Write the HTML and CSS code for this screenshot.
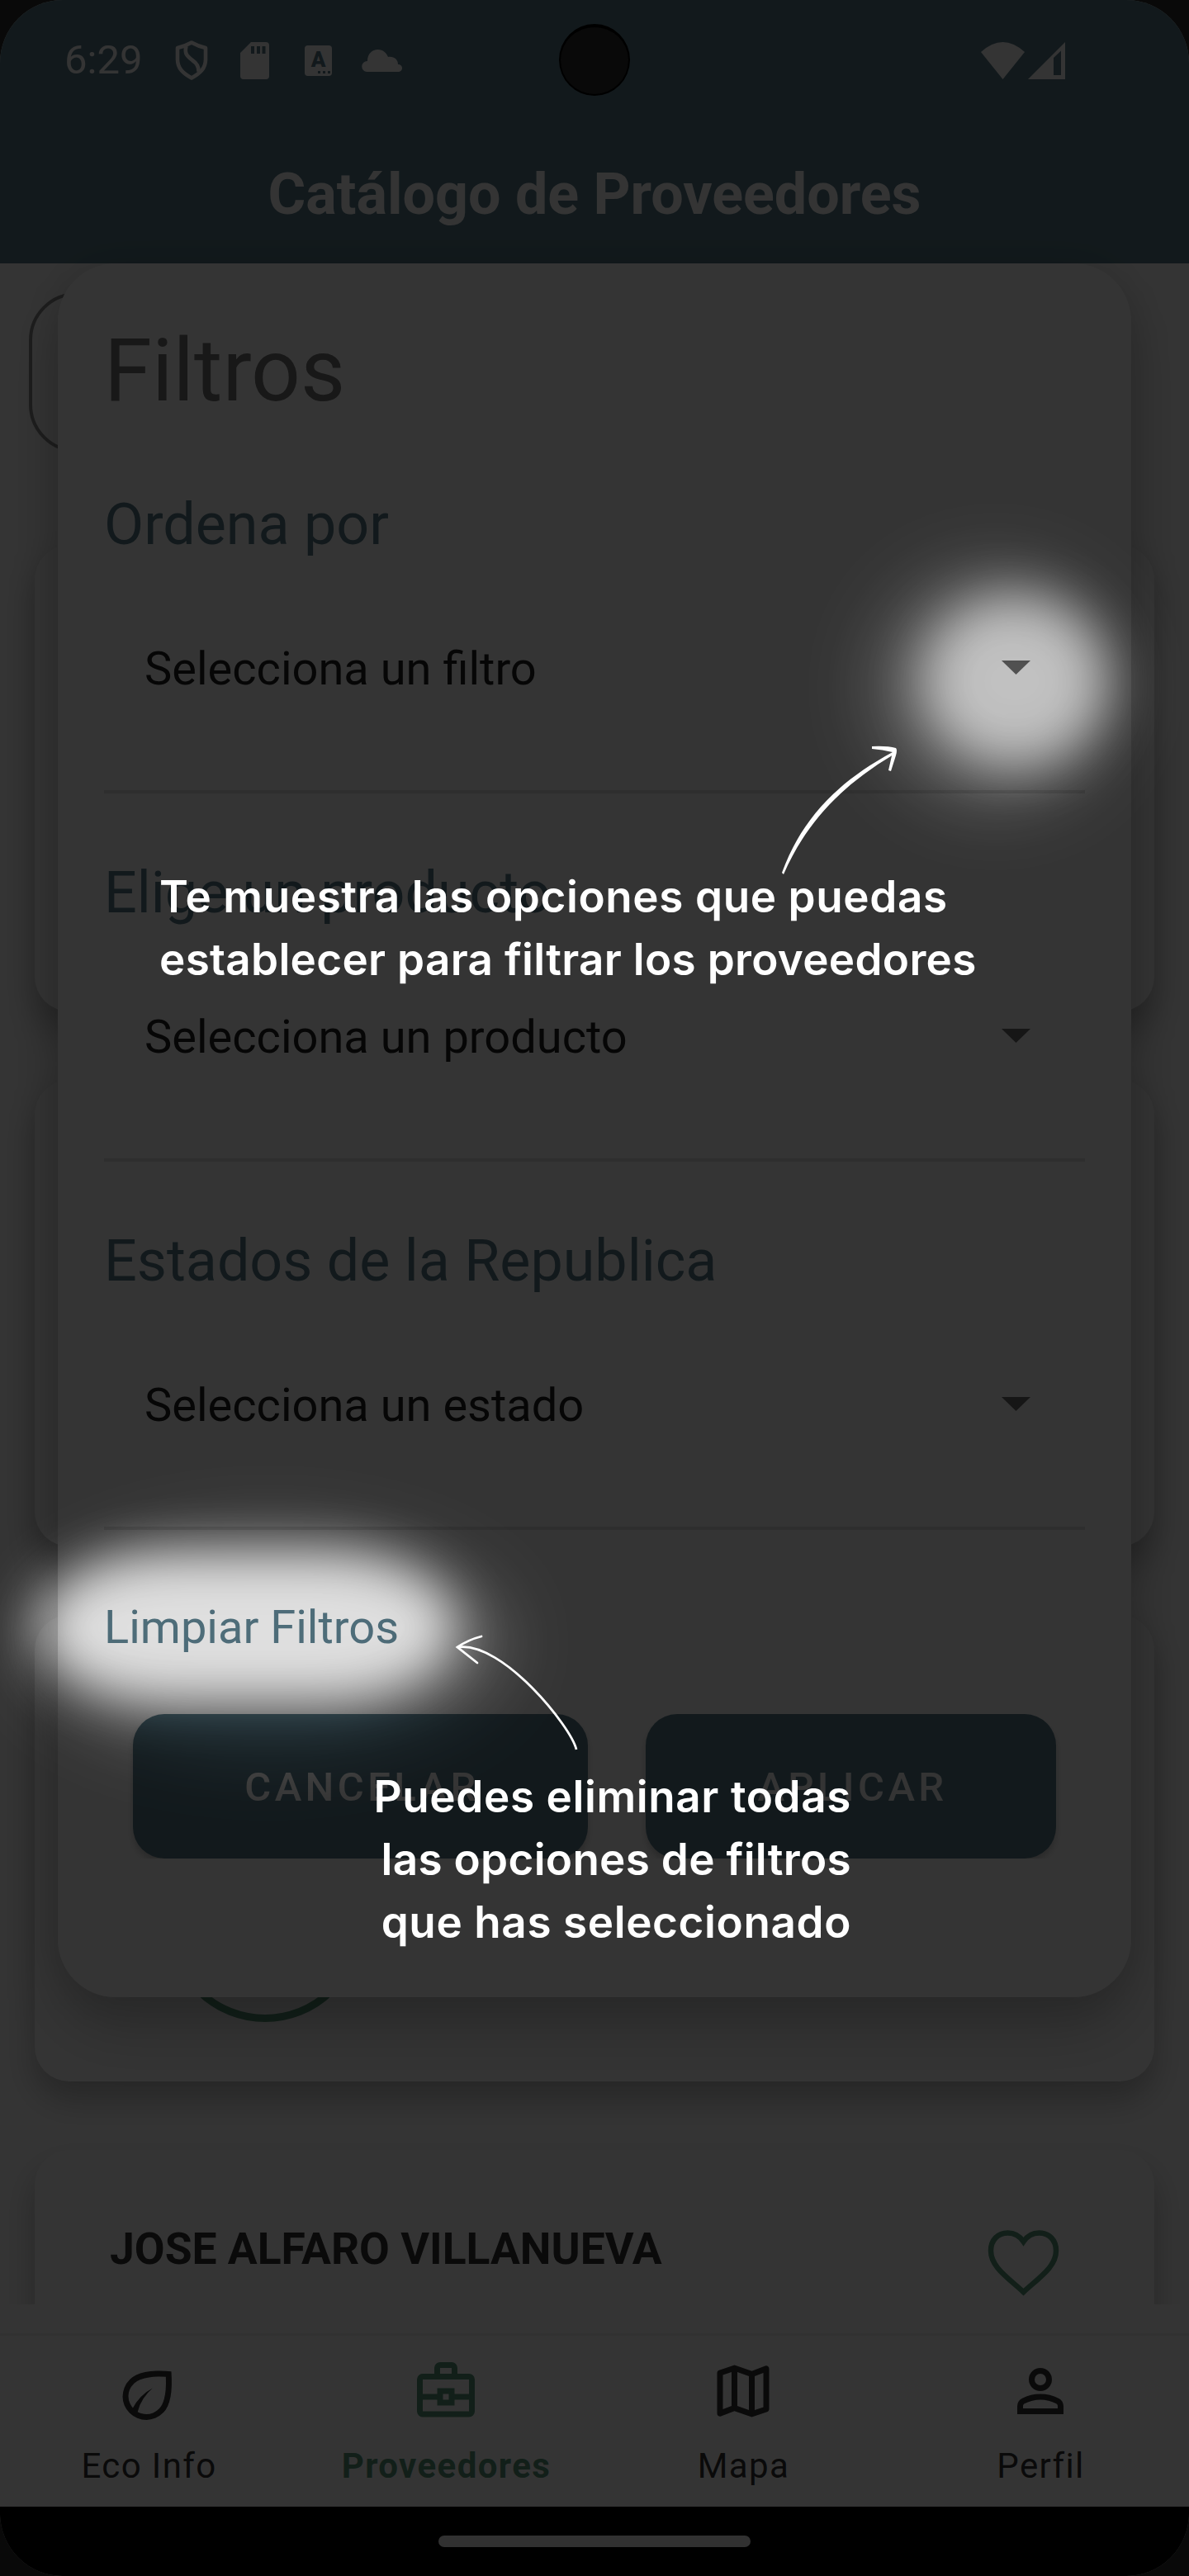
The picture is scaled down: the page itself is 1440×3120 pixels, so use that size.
FILE: index.html
```html
<!DOCTYPE html>
<html lang="es">
<head>
<meta charset="utf-8">
<title>Catálogo de Proveedores</title>
<link rel="stylesheet" href="styles.css">
</head>
<body>
<div class="phone">
  <header class="topbar">
    <div class="status">
      <span class="time">6:29</span>
      <svg class="i-shield" viewBox="0 0 40 48"><path d="M20 2.500Q28 7 37 9V23C37 34 30 40 20 45.500 10 40 3 34 3 23V9Q12 7 20 2.500Z" fill="none" stroke="#fff" stroke-width="4.600" stroke-linejoin="round"/><path d="M13.500 7C11 16 15 19 21 24 27 28 29 32 28.500 38" fill="none" stroke="#fff" stroke-width="4.600"/></svg>
      <svg class="i-sd" viewBox="0 0 35 45"><path fill="#fff" fill-rule="evenodd" d="M13 0H31Q35 0 35 4V41Q35 45 31 45H4Q0 45 0 41V13ZM13 5V14H17V5ZM20 5V14H24V5ZM26.500 5V14H30.500V5Z"/></svg>
      <span class="i-a"><b>A</b><i></i></span>
      <svg class="i-cloud" viewBox="0 0 49 27"><path fill="#fff" d="M6.500 27A6.500 6.500 0 0 1 7 14C7 5 13 0 19.500 0 26 0 30 4 32 9 39 8 44 12 44 18 47 18 49 20 49 22.500 49 25 47 27 44 27Z"/></svg>
      <span class="spacer"></span>
      <svg class="i-wifi" viewBox="0 0 53 45"><path fill="#fff" d="M0 12Q26.500-12 53 12L26.500 45Z"/></svg>
      <svg class="i-signal" viewBox="0 0 45 45"><path fill="#fff" fill-rule="evenodd" d="M45 0V45H0ZM31 19V40H40V10.500Z"/></svg>
    </div>
    <h1 class="title">Catálogo de Proveedores</h1>
  </header>
  <main class="list">
    <div class="search"></div>
    <section class="card"></section>
    <section class="card"></section>
    <section class="card card-photo"><span class="avatar"></span></section>
    <section class="card card-name">
      <h2>JOSE ALFARO VILLANUEVA</h2>
      <svg class="heart" viewBox="0 0 86 80"><path d="M43 14C37 5 30 3.500 24 3.500 12 3.500 3.500 12 3.500 25 3.500 44 22 56 43 75 64 56 82.500 44 82.500 25 82.500 12 74 3.500 62 3.500 56 3.500 49 5 43 14Z" fill="none" stroke="#58997a" stroke-width="6.500"/></svg>
    </section>
  </main>
  <nav class="nav">
    <a class="tab"><svg viewBox="0 -960 960 960"><path d="M216-176q-45-45-70.500-104T120-402q0-63 24-124.500T222-642q35-35 86.500-60t122-39.500Q501-756 591.500-759t202.500 7q8 106 5 195t-16.500 160.500q-13.500 71.500-38 125T684-182q-53 53-112.500 77.500T450-80q-65 0-127-25.500T216-176Zm112-16q29 17 59.500 24.500T450-160q46 0 91-18.500t86-59.500q18-18 36.500-50.500t32-85Q709-426 716-500.500t2-177.500q-49-2-110.500-1.500T485-670q-61 9-116 29t-90 55q-45 45-62 89t-17 85q0 59 22.500 103.500T262-246q42-80 111-153.500T534-520q-72 63-125.500 142.500T328-192Z"/></svg><span>Eco Info</span></a>
    <a class="tab active"><svg viewBox="0 -960 960 960"><path d="M160-120q-33 0-56.500-23.500T80-200v-440q0-33 23.500-56.500T160-720h160v-80q0-33 23.500-56.500T400-880h160q33 0 56.500 23.500T640-800v80h160q33 0 56.500 23.500T880-640v440q0 33-23.500 56.500T800-120H160Zm240-600h160v-80H400v80Zm400 360H600v80H360v-80H160v160h640v-160Zm-360 0h80v-80h-80v80Zm-280-80h200v-80h240v80h200v-200H160v200Z"/></svg><span>Proveedores</span></a>
    <a class="tab"><svg viewBox="0 -960 960 960"><path d="m600-120-240-84-186 72q-20 8-37-4.500T120-170v-560q0-13 7.500-23t20.500-15l212-72 240 84 186-72q20-8 37 4.500t17 33.500v560q0 13-7.500 23T812-192l-212 72Zm-40-98v-468l-160-56v468l160 56Zm80 0 120-40v-474l-120 46v468Zm-440-10 120-46v-468l-120 40v474Z"/></svg><span>Mapa</span></a>
    <a class="tab"><svg viewBox="0 -960 960 960"><path d="M480-480q-66 0-113-47t-47-113q0-66 47-113t113-47q66 0 113 47t47 113q0 66-47 113t-113 47ZM160-160v-112q0-34 17.500-62.500T224-378q62-31 126-46.500T480-440q66 0 130 15.500T736-378q29 15 46.500 43.500T800-272v112H160Zm80-80h480v-32q0-11-5.500-20T700-306q-54-27-109-40.500T480-360q-56 0-111 13.500T260-306q-9 5-14.500 14t-5.500 20v32Zm240-320q33 0 56.500-23.500T560-640q0-33-23.500-56.500T480-720q-33 0-56.500 23.500T400-640q0 33 23.500 56.500T480-560Z"/></svg><span>Perfil</span></a>
  </nav>
  <footer class="home"><span></span></footer>

  <div class="dialog">
    <h2 class="dialog-title">Filtros</h2>
    <div class="field"><h3>Ordena por</h3><div class="select"><span>Selecciona un filtro</span><i class="caret"></i></div></div>
    <div class="field"><h3>Elige un producto</h3><div class="select"><span>Selecciona un producto</span><i class="caret"></i></div></div>
    <div class="field"><h3>Estados de la Republica</h3><div class="select"><span>Selecciona un estado</span><i class="caret"></i></div></div>
    <a class="clear">Limpiar Filtros</a>
    <div class="actions"><button class="cancel">CANCELAR</button><button class="apply">APLICAR</button></div>
  </div>
</div>
<span class="camera"></span>

<svg class="scrim" viewBox="0 0 1440 3120">
  <defs>
    <filter id="soft" x="-80%" y="-100%" width="260%" height="300%"><feGaussianBlur stdDeviation="31"/></filter>
    <filter id="halo" x="-80%" y="-100%" width="260%" height="300%"><feGaussianBlur stdDeviation="42"/></filter>
    <mask id="spots" maskUnits="userSpaceOnUse" x="0" y="0" width="1440" height="3120">
      <rect width="1440" height="3120" fill="#fff"/>
      <ellipse cx="1206" cy="832" rx="150" ry="145" opacity=".2" filter="url(#halo)"/>
      <ellipse cx="1229" cy="825" rx="112" ry="103" opacity=".61" filter="url(#soft)"/>
      <ellipse cx="325" cy="1990" rx="290" ry="135" opacity=".2" filter="url(#halo)"/>
      <rect x="46" y="1882" width="506" height="178" rx="160" ry="89" opacity=".8" filter="url(#soft)"/>
    </mask>
  </defs>
  <rect width="1440" height="3120" fill="#000" fill-opacity=".797" mask="url(#spots)"/>
  <g fill="#fff">
    <path d="M947 1057C968 1000 1005 952 1081 911L1082 914C1012 956 974 1002 949 1059Z"/>
    <path d="M1056 904Q1074 903 1085 906 1087 908 1085 915L1079 934 1076 933 1081 911Q1069 908 1056 907Z"/>
  </g>
  <path d="M698 2119C692 2092 609 1988 555 1995" fill="none" stroke="#fff" stroke-width="2.800"/>
  <path d="M583 1982Q567 1986 554 1995L578 2014" fill="none" stroke="#fff" stroke-width="2.800" stroke-linecap="round"/>
</svg>
<p class="tip tip-select"><span class="wide">Te muestra las opciones que puedas</span><br><span class="snug">establecer para filtrar los proveedores</span></p>
<p class="tip tip-clear"><span class="wide">Puedes eliminar todas</span><br><span class="snug">las opciones de filtros</span><br><span class="wide">que has seleccionado</span></p>
</body>
</html>
```
FILE: styles.css
```css
* { box-sizing: border-box; margin: 0; padding: 0; }
body {
  position: relative;
  width: 1440px;
  height: 3120px;
  overflow: hidden;
  background: #2d2d2d;
  font-family: Roboto, "Liberation Sans", sans-serif;
}
h1, h2, h3 { font-weight: 400; }
svg { display: block; }

.phone {
  position: relative;
  display: flex;
  flex-direction: column;
  height: 3120px;
  border-radius: 76px;
  overflow: hidden;
  background: #fff;
}

/* top bar */
.topbar { height: 319px; background: #5a7d8b; color: #fff; }
.status { display: flex; align-items: center; height: 146px; padding: 0 150px 0 78px; }
.time { width: 134px; font-size: 49px; line-height: 58px; }
.i-shield { width: 40px; height: 48px; }
.i-sd { width: 35px; height: 45px; margin-left: 39px; }
.i-a {
  position: relative;
  width: 33px;
  height: 37px;
  margin-left: 43px;
  border-radius: 4px;
  background: #fff;
  color: #5a7d8b;
  text-align: center;
}
.i-a b { display: block; font-size: 26px; line-height: 35px; font-weight: 900; }
.i-a i { position: absolute; right: 2px; bottom: 3px; width: 15px; border-bottom: 3px dotted #5a7d8b; }
.i-cloud { width: 49px; height: 27px; margin-left: 36px; }
.spacer { flex: 1; }
.i-wifi { width: 53px; height: 45px; }
.i-signal { width: 45px; height: 45px; margin-left: 4px; }
.title { padding-top: 48px; font-size: 70px; line-height: 82px; font-weight: 700; text-align: center; white-space: nowrap; }
.camera {
  position: absolute;
  left: 677px;
  top: 29px;
  width: 86px;
  height: 87px;
  border: 2px solid #000;
  border-top-width: 4px;
  border-radius: 50%;
  background: #2d2d2d;
}

/* provider list */
.list {
  display: flex;
  flex-direction: column;
  gap: 83px;
  height: 2472px;
  padding: 35px 42px 0;
  overflow: hidden;
}
.search {
  flex: none;
  height: 194px;
  margin: 0 150px 29px -7px;
  border: 4px solid #919191;
  border-radius: 58px;
}
.card {
  flex: none;
  height: 565px;
  border-radius: 42px;
  background: #fff;
  box-shadow: 0 22px 40px rgba(0, 0, 0, .27);
}
.card-photo { display: flex; align-items: flex-end; padding: 0 0 72px 161px; }
.avatar { width: 236px; height: 236px; border: 9px solid #58997a; border-radius: 50%; }
.card-name { display: flex; justify-content: space-between; align-items: flex-start; padding: 97px 115px 0 91px; }
.card-name h2 { margin-top: -8px; font-size: 53.4px; line-height: 62px; font-weight: 700; color: #333; white-space: nowrap; }
.heart { width: 87px; height: 80px; }

/* bottom navigation */
.nav { display: flex; flex: none; height: 245px; padding-top: 35px; }
.tab {
  flex: 1;
  display: flex;
  flex-direction: column;
  align-items: center;
  border-top: 3px solid #ededed;
  padding-top: 25px;
  font-size: 42px;
  line-height: 50px;
  letter-spacing: 1.4px;
  color: #333;
  fill: #333;
}
.tab svg { width: 84px; height: 84px; }
.tab span { margin-top: 24px; padding-left: 1px; }
.tab.active { font-weight: 700; color: #58997a; fill: #58997a; }
.home { flex: none; display: flex; justify-content: center; height: 84px; padding-top: 35px; background: #000; }
.home span { width: 378px; height: 14px; border-radius: 7px; background: #eee; }

/* filter dialog */
.dialog {
  position: absolute;
  left: 70px;
  top: 319px;
  width: 1300px;
  height: 2100px;
  padding: 69px 56px 0;
  border-radius: 70px;
  background: #fff;
  box-shadow: 0 40px 70px rgba(0, 0, 0, .2), 0 0 50px rgba(0, 0, 0, .12);
}
.dialog-title { height: 189px; font-size: 105px; line-height: 124px; color: #757575; }
.field { height: 446px; }
.field h3 { height: 164px; padding-top: 17px; font-size: 70px; line-height: 82px; color: #5a7d8b; }
.select {
  display: flex;
  justify-content: space-between;
  height: 220px;
  padding: 36px 66px 0 49px;
  border-bottom: 4px solid #e0e0e0;
  font-size: 56px;
  line-height: 66px;
  color: #212121;
}
.caret {
  width: 35px;
  height: 17px;
  margin-top: 23px;
  background: #6b6b6b;
  clip-path: polygon(0 0, 100% 0, 50% 100%);
}
.clear { display: block; height: 161px; padding-top: 23px; font-size: 56px; line-height: 66px; color: #5a7d8b; }
.actions { display: flex; justify-content: center; gap: 70px; overflow: hidden; }
.actions button {
  height: 175px;
  padding: 2px 0 0 4px;
  border: 0;
  border-radius: 38px;
  background: #5a7d8b;
  box-shadow: 0 6px 9px rgba(0, 0, 0, .2);
  color: #fff;
  font: 500 49px/58px Roboto, sans-serif;
  letter-spacing: 4.4px;
}
.actions .cancel { width: 551px; }
.actions .apply { width: 497px; }

/* coach marks */
.scrim { position: absolute; left: 0; top: 0; width: 1440px; height: 3120px; }
.tip {
  position: absolute;
  font: 600 53px/76px Inter, "Liberation Sans", sans-serif;
  color: #fff;
  white-space: nowrap;
}
.tip .wide { letter-spacing: .6px; }
.tip .snug { letter-spacing: .3px; }
.tip-select { left: 193px; top: 1048px; }
.tip-clear { right: 409px; top: 2138px; text-align: right; }
```
